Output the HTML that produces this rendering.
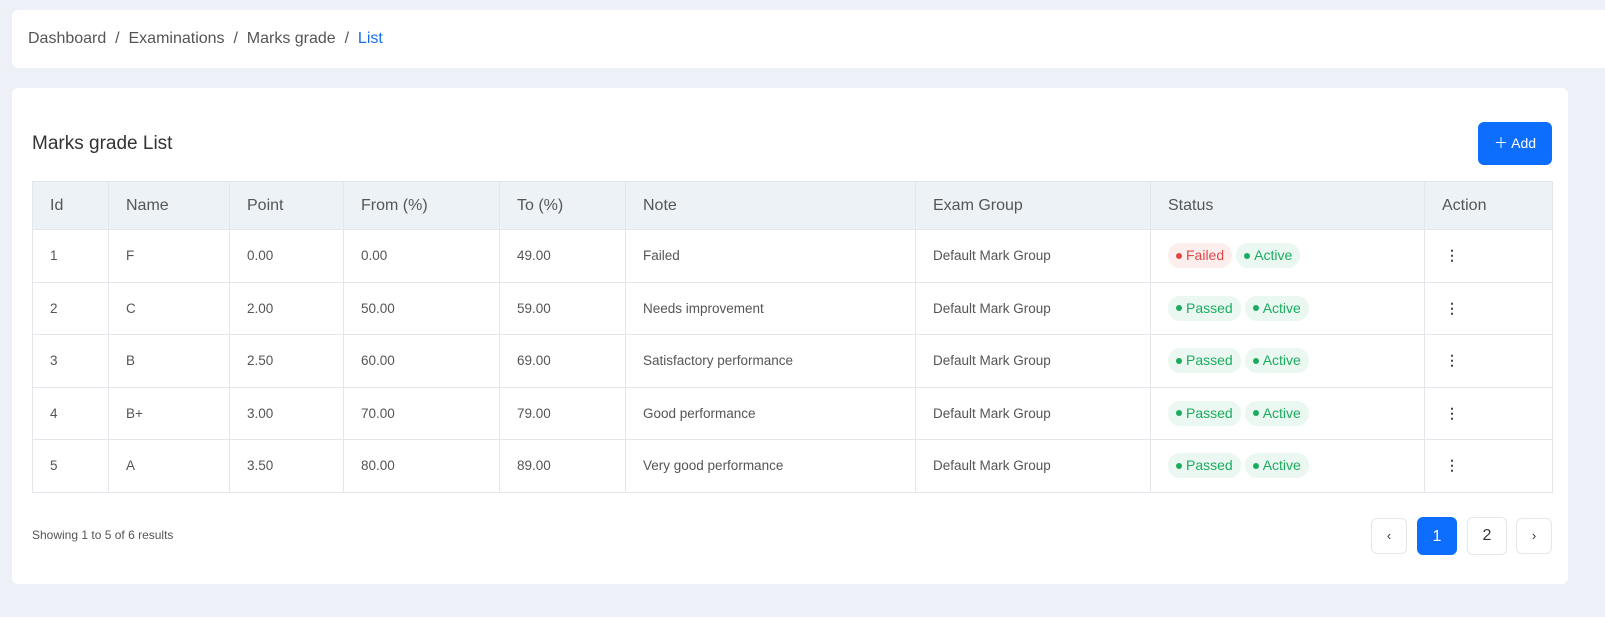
<!DOCTYPE html><html><head><style>
body{margin:0;width:1605px;height:617px;background:#edf1f7;font-family:"Liberation Sans",sans-serif;overflow:hidden;position:relative}
.bc{position:absolute;left:12px;top:10px;width:1600px;height:58px;background:#fff;border-radius:6px;font-size:16px;color:#555;line-height:58px;padding-left:16px;box-sizing:border-box}
.bc b{font-weight:normal;color:#1a6ee8}
.card{position:absolute;left:12px;top:88px;width:1556px;height:496px;background:#fff;border-radius:6px}
h1{position:absolute;left:20px;top:45px;margin:0;font-size:19px;font-weight:normal;color:#333}
.add{position:absolute;left:1466px;top:34px;width:74px;height:43px;background:#0d6efd;border-radius:6px;color:#fff;font-size:14px;line-height:43px;text-align:center}
table{position:absolute;left:20px;top:93px;border-collapse:collapse;font-size:13.5px;color:#555}
td,th{border:1px solid #e3e6ea;padding:0 0 0 17px;text-align:left;height:52.5px;box-sizing:border-box}
th{background:#edf2f7;font-weight:normal;font-size:16px;height:48px;color:#555}
.p{display:inline-block;border-radius:12px;padding:0 8px;height:25px;line-height:25px;font-size:14px;margin-right:4px}
.p i{display:inline-block;width:6px;height:6px;border-radius:50%;background:currentColor;vertical-align:middle;margin-right:4px;position:relative;top:-1px}
.f{background:#fdeeee;color:#e04848}.g{background:#ebf8f1;color:#1bab5f}
.dots{font-weight:bold;font-size:14px;padding-left:20px;color:#444}
.sh{position:absolute;left:20px;top:440px;font-size:12px;color:#555}
.pg{position:absolute;top:430px;width:36px;height:36px;border:1px solid #e5e7ea;border-radius:6px;box-sizing:border-box;text-align:center;line-height:34px;font-size:16px;color:#333}
</style></head><body>
<div class="bc">Dashboard &nbsp;/&nbsp; Examinations &nbsp;/&nbsp; Marks grade &nbsp;/&nbsp; <b>List</b></div>
<div class="card">
<h1>Marks grade List</h1>
<div class="add">＋ Add</div>
<table>
<colgroup><col style="width:76px"><col style="width:121px"><col style="width:114px"><col style="width:156px"><col style="width:126px"><col style="width:290px"><col style="width:235px"><col style="width:274px"><col style="width:128px"></colgroup>
<tr><th>Id</th><th>Name</th><th>Point</th><th>From (%)</th><th>To (%)</th><th>Note</th><th>Exam Group</th><th>Status</th><th>Action</th></tr>
<tr><td>1</td><td>F</td><td>0.00</td><td>0.00</td><td>49.00</td><td>Failed</td><td>Default Mark Group</td><td><span class="p f"><i></i>Failed</span><span class="p g"><i></i>Active</span></td><td class="dots">⋮</td></tr>
<tr><td>2</td><td>C</td><td>2.00</td><td>50.00</td><td>59.00</td><td>Needs improvement</td><td>Default Mark Group</td><td><span class="p g"><i></i>Passed</span><span class="p g"><i></i>Active</span></td><td class="dots">⋮</td></tr>
<tr><td>3</td><td>B</td><td>2.50</td><td>60.00</td><td>69.00</td><td>Satisfactory performance</td><td>Default Mark Group</td><td><span class="p g"><i></i>Passed</span><span class="p g"><i></i>Active</span></td><td class="dots">⋮</td></tr>
<tr><td>4</td><td>B+</td><td>3.00</td><td>70.00</td><td>79.00</td><td>Good performance</td><td>Default Mark Group</td><td><span class="p g"><i></i>Passed</span><span class="p g"><i></i>Active</span></td><td class="dots">⋮</td></tr>
<tr><td>5</td><td>A</td><td>3.50</td><td>80.00</td><td>89.00</td><td>Very good performance</td><td>Default Mark Group</td><td><span class="p g"><i></i>Passed</span><span class="p g"><i></i>Active</span></td><td class="dots">⋮</td></tr>
</table>
<div class="sh">Showing 1 to 5 of 6 results</div>
<div class="pg" style="left:1359px;font-size:13px">‹</div>
<div class="pg" style="left:1405px;width:40px;height:38px;top:429px;background:#0d6efd;border-color:#0d6efd;color:#fff;line-height:38px">1</div>
<div class="pg" style="left:1455px;width:40px;height:38px;top:429px;line-height:36px">2</div>
<div class="pg" style="left:1504px;font-size:13px">›</div>
</div>
</body></html>
